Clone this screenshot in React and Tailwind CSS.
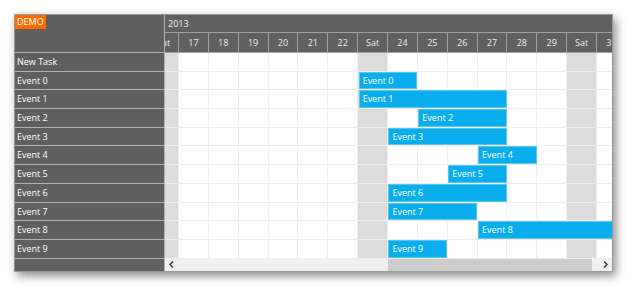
import React from 'react';

const W = 29.86;

const days = ["Sat", "17", "18", "19", "20", "21", "22", "Sat", "24", "25", "26", "27", "28", "29", "Sat", "31"];
const weekend = [0, 7, 14];

const rows = [
  { name: "New Task" },
  { name: "Event 0", s: 7, e: 9 },
  { name: "Event 1", s: 7, e: 12 },
  { name: "Event 2", s: 9, e: 12 },
  { name: "Event 3", s: 8, e: 12 },
  { name: "Event 4", s: 11, e: 13 },
  { name: "Event 5", s: 10, e: 12 },
  { name: "Event 6", s: 8, e: 12 },
  { name: "Event 7", s: 8, e: 11 },
  { name: "Event 8", s: 11, e: 17 },
  { name: "Event 9", s: 8, e: 10 },
];

const Chevron = ({ dir }) => (
  <svg width="5" height="7" viewBox="0 0 5 7" className="shrink-0">
    <path
      d={dir === "left" ? "M4 0.5 L1 3.5 L4 6.5" : "M1 0.5 L4 3.5 L1 6.5"}
      fill="none"
      stroke="#333"
      strokeWidth="1.4"
    />
  </svg>
);

const BodyRow = ({ row }) => (
  <div className="relative h-[18.7px] flex">
    {days.map((d, i) => (
      <div
        key={i}
        className={`w-[29.86px] shrink-0 border-r border-b border-[#eeeeee] ${weekend.includes(i) ? 'bg-[#dcdcdc]' : 'bg-white'}`}
      />
    ))}
    {row.s !== undefined && (
      <div
        className="absolute top-0 h-[17.7px] bg-[#0aaeec] border border-[#5cc6f1] text-white text-[9px] leading-[16px] pl-[3px] whitespace-nowrap"
        style={{ left: row.s * W + 0.5, width: (row.e - row.s) * W - 1 }}
      >
        {row.name}
      </div>
    )}
  </div>
);

export default function App() {
  return (
    <div className="w-[632px] h-[290px] bg-white pl-[14px] pt-[14px] font-['Open_Sans',sans-serif]">
      <div className="w-[599px] h-[258px] border border-[#9a9a9a] flex shadow-[3px_4px_9px_rgba(0,0,0,0.45)] overflow-hidden">
        {/* left panel */}
        <div className="w-[150px] shrink-0 flex flex-col bg-[#5f5f5f] border-r border-[#b0b0b0]">
          <div className="h-[38px] shrink-0 border-b border-[#b0b0b0] flex items-start">
            <div className="bg-[#ff6a00] text-white text-[9px] leading-[14px] px-[2px] w-[31px]">DEMO</div>
          </div>
          {rows.map((r) => (
            <div key={r.name} className="h-[18.7px] shrink-0 border-b border-[#b0b0b0] text-white text-[9px] leading-[17.7px] pl-[2px]">
              {r.name}
            </div>
          ))}
          <div className="flex-1" />
        </div>

        {/* timeline */}
        <div className="flex-1 min-w-0 flex flex-col overflow-hidden">
          <div className="h-[18px] shrink-0 bg-[#606060] border-b border-[#a0a0a0] text-[#f2f2f2] text-[9px] leading-[17px] pl-[3px]">
            2013
          </div>
          <div className="ml-[-15.9px] flex flex-col">
            <div className="h-[20px] shrink-0 flex bg-[#606060]">
              {days.map((d, i) => (
                <div
                  key={i}
                  className="w-[29.86px] shrink-0 border-r border-b border-[#a0a0a0] text-[#eeeeee] text-[9px] leading-[19px] text-center whitespace-nowrap overflow-hidden"
                >
                  {d}
                </div>
              ))}
            </div>
            {rows.map((r) => (
              <BodyRow key={r.name} row={r} />
            ))}
          </div>
          <div className="flex-1 flex items-stretch bg-[#f0f0f0]">
            <div className="w-[13px] flex items-center justify-center"><Chevron dir="left" /></div>
            <div className="flex-1 flex">
              <div className="w-[210px]" />
              <div className="w-[204px] bg-[#cdcdcd]" />
            </div>
            <div className="w-[13px] flex items-center justify-center"><Chevron dir="right" /></div>
          </div>
        </div>
      </div>
    </div>
  );
}
